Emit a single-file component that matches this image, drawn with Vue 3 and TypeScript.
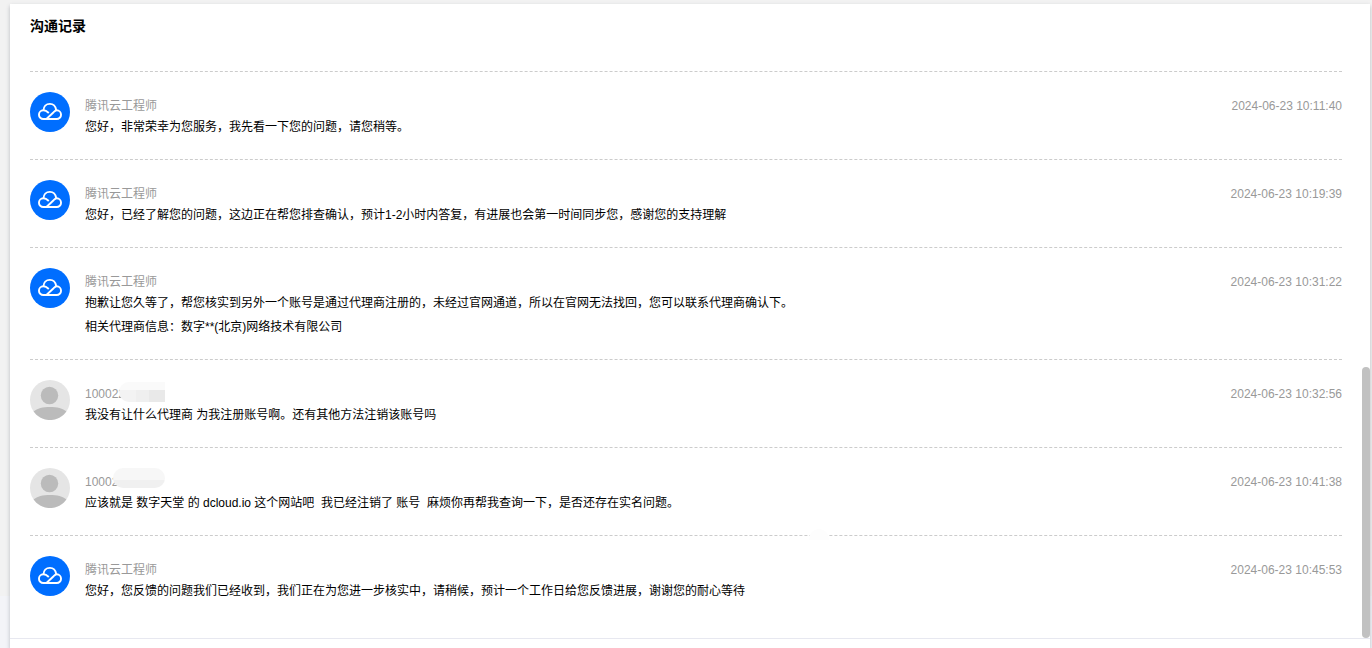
<script setup lang="ts">
interface CommRecord {
  id: number
  role: 'engineer' | 'customer'
  name: string
  mask?: 'square' | 'round'
  time: string
  lines: string[]
  smudge?: boolean
}

const records: CommRecord[] = [
  { id: 1, role: 'engineer', name: '腾讯云工程师', time: '2024-06-23 10:11:40', lines: ['您好，非常荣幸为您服务，我先看一下您的问题，请您稍等。'] },
  { id: 2, role: 'engineer', name: '腾讯云工程师', time: '2024-06-23 10:19:39', lines: ['您好，已经了解您的问题，这边正在帮您排查确认，预计1-2小时内答复，有进展也会第一时间同步您，感谢您的支持理解'] },
  {
    id: 3,
    role: 'engineer',
    name: '腾讯云工程师',
    time: '2024-06-23 10:31:22',
    lines: [
      '抱歉让您久等了，帮您核实到另外一个账号是通过代理商注册的，未经过官网通道，所以在官网无法找回，您可以联系代理商确认下。',
      '相关代理商信息：数字**(北京)网络技术有限公司',
    ],
  },
  { id: 4, role: 'customer', name: '100022', mask: 'square', time: '2024-06-23 10:32:56', lines: ['我没有让什么代理商 为我注册账号啊。还有其他方法注销该账号吗'] },
  { id: 5, role: 'customer', name: '10002', mask: 'round', time: '2024-06-23 10:41:38', lines: ['应该就是 数字天堂 的 dcloud.io 这个网站吧  我已经注销了 账号  麻烦你再帮我查询一下，是否还存在实名问题。'] },
  { id: 6, role: 'engineer', name: '腾讯云工程师', time: '2024-06-23 10:45:53', lines: ['您好，您反馈的问题我们已经收到，我们正在为您进一步核实中，请稍候，预计一个工作日给您反馈进展，谢谢您的耐心等待'], smudge: true },
]
</script>

<template>
  <div class="page">
    <main class="panel">
      <section class="history">
        <h2 class="title">沟通记录</h2>
        <ul class="records">
          <li v-for="r in records" :key="r.id" class="record">
            <span v-if="r.smudge" class="smudge"></span>
            <svg v-if="r.role === 'engineer'" class="avatar" viewBox="0 0 40 40" aria-hidden="true">
              <circle cx="20" cy="20" r="20" fill="#006eff" />
              <g fill="none" stroke="#fff" stroke-width="1.9">
                <path d="M16.400 27 23.600 20.200C24.800 19 25.600 18.300 26.700 18.300A4.350 4.350 0 0 1 26.700 27H13.300A4.350 4.350 0 0 1 13.300 18.300C15.200 18.300 16.800 19.100 18.800 21" />
                <path d="M13.500 18.600C13.500 14.600 16.200 11.900 19.900 11.900C23.100 11.900 25.500 13.900 26.200 18" />
              </g>
            </svg>
            <svg v-else class="avatar" viewBox="0 0 40 40" aria-hidden="true">
              <circle cx="20" cy="20" r="20" fill="#e5e5e5" />
              <circle cx="19.500" cy="15.500" r="8.700" fill="#bbb" />
              <path d="M3.600 31.500C7 28.400 13 27 20 27s13 1.400 16.400 4.500A20 20 0 0 1 3.600 31.500Z" fill="#bbb" />
            </svg>
            <div class="content">
              <div class="meta">
                <span class="name">{{ r.name }}<i v-if="r.mask" class="mask" :class="r.mask"></i></span>
                <time class="time">{{ r.time }}</time>
              </div>
              <p v-for="(line, i) in r.lines" :key="i" class="line">{{ line }}</p>
            </div>
          </li>
        </ul>
        <span class="thumb"></span>
      </section>
      <div class="footer"></div>
    </main>
  </div>
</template>

<style>
body {
  margin: 0;
}
</style>

<style scoped>
.page {
  box-sizing: border-box;
  min-height: 100vh;
  padding: 4px 2px 0 10px;
  display: flex;
  background: linear-gradient(#f2f2f2 92%, #f3f4f8 92%);
  color: #000;
  font: 12px/18px "Liberation Sans", "Noto Sans CJK SC", sans-serif;
}
.panel {
  flex: 1;
  min-width: 0;
  display: flex;
  flex-direction: column;
  background: #fff;
  box-shadow: 0 2px 4px rgba(54, 58, 80, 0.3);
}
.history {
  flex: 1;
  position: relative;
  padding: 12px 28px 0 20px;
}
.title {
  margin: 0 0 35px;
  font-size: 14px;
  line-height: 20px;
  font-weight: 700;
}
.records {
  list-style: none;
  margin: 0;
  padding: 0;
}
.record {
  position: relative;
  display: flex;
  gap: 15px;
  padding: 20px 0;
  border-top: 1px dashed #ccc;
}
.avatar {
  flex: none;
  width: 40px;
  height: 40px;
}
.content {
  flex: 1;
  min-width: 0;
  padding-top: 5px;
}
.meta {
  display: flex;
  justify-content: space-between;
  color: #999;
}
.name {
  position: relative;
}
.mask {
  position: absolute;
  height: 20px;
}
.mask.square {
  left: 34px;
  top: -3px;
  width: 46px;
  border-radius: 10px 0 0 10px;
  background:
    linear-gradient(#fafafa 40%, transparent 40%),
    linear-gradient(90deg, #f3f3f3 36%, #efefef 36% 66%, #e9e9e9 66%);
}
.mask.round {
  left: 28px;
  top: -5px;
  width: 52px;
  border-radius: 10px;
  background: linear-gradient(#f7f7f7 60%, #f0f0f0 60%);
}
.line {
  margin: 0;
  line-height: 24px;
  white-space: pre-wrap;
}
.smudge {
  position: absolute;
  left: 779px;
  top: -7px;
  width: 20px;
  height: 11px;
  border-radius: 10px 10px 0 0;
  background: #fdfdfd;
}
.thumb {
  position: absolute;
  right: 0;
  bottom: 0;
  width: 8px;
  height: 42.8%;
  border-radius: 4px;
  background: #c1c1c1;
}
.footer {
  height: 9px;
  border-top: 1px solid #e7e8f0;
}
</style>
